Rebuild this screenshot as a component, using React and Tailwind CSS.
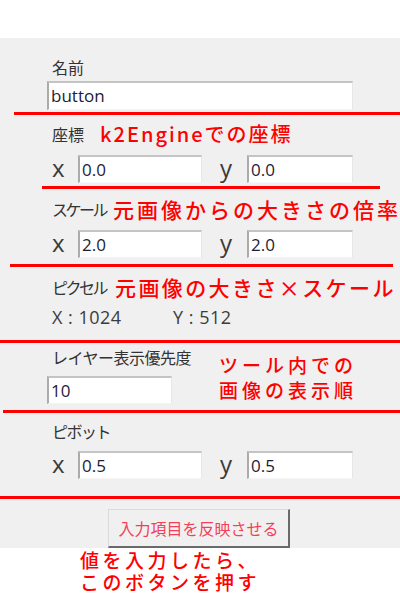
import React from "react";

const JP = { fontFamily: '"Noto Sans CJK JP", "Noto Sans", sans-serif' };
const UI = { fontFamily: '"Open Sans", "Noto Sans CJK JP", sans-serif' };

const RedLine = ({ className }) => (
  <div className={`h-[3px] bg-[#ff0000] ${className}`} />
);

const Field = ({ value, className }) => (
  <div
    className={`h-[28px] bg-white border-t-2 border-l-2 border-t-[#c4c4c4] border-l-[#ababab] border-r border-b border-r-[#e6e6e6] border-b-[#f4f4f4] pl-[2px] flex items-center text-[17px] text-[#1c1c34] ${className}`}
    style={UI}
  >
    {value}
  </div>
);

const Label = ({ children, className = "" }) => (
  <div
    className={`shrink-0 whitespace-nowrap text-[16px] leading-[20px] text-[#333] ${className}`}
    style={JP}
  >
    {children}
  </div>
);

const Note = ({ children, className = "" }) => (
  <div className={`text-[#ff0000] font-medium ${className}`} style={JP}>
    {children}
  </div>
);

const XYRow = ({ x, y, className = "" }) => (
  <div className={`flex items-center pl-[52px] ${className}`}>
    <span className="w-[26px] text-[24px] leading-[28px] text-[#3a3a3a] pb-[2px]" style={UI}>
      x
    </span>
    <Field value={x} className="w-[124px]" />
    <span className="ml-[18px] w-[27px] text-[24px] leading-[28px] text-[#3a3a3a] pb-[2px]" style={UI}>
      y
    </span>
    <Field value={y} className="w-[106px]" />
  </div>
);

export default function App() {
  return (
    <div className="w-[400px] h-[600px] bg-white overflow-hidden">
      <div className="h-[38px]" />

      {/* property panel */}
      <div className="h-[510px] bg-[#f0f0f0] flex flex-col">
        <Label className="mt-[19px] ml-[52px]">名前</Label>
        <Field value="button" className="mt-[4px] ml-[47px] w-[306px] h-[29px]" />
        <RedLine className="mt-[2px] ml-[14px]" />

        <div className="mt-[7px] h-[24px] flex items-center pl-[52px]">
          <Label>座標</Label>
          <Note className="ml-[16px] text-[20px] leading-[24px] tracking-[2px] whitespace-nowrap">
            k2Engineでの座標
          </Note>
        </div>
        <XYRow x="0.0" y="0.0" className="mt-[8px]" />
        <RedLine className="mt-[2px] ml-[42px] w-[338px]" />

        <div className="mt-[8px] h-[24px] flex items-center pl-[52px]">
          <Label className="tracking-[-2.5px]">スケール</Label>
          <Note className="ml-[7px] text-[21px] leading-[24px] tracking-[3px] whitespace-nowrap">
            元画像からの大きさの倍率
          </Note>
        </div>
        <XYRow x="2.0" y="2.0" className="mt-[8px]" />
        <RedLine className="mt-[5px] ml-[10px] w-[383px]" />

        <div className="mt-[8px] h-[24px] flex items-center pl-[52px]">
          <Label className="tracking-[-2.5px]">ピクセル</Label>
          <Note className="ml-[9px] text-[21px] leading-[24px] tracking-[2.4px] whitespace-nowrap">
            元画像の大きさ×スケール
          </Note>
        </div>
        <div
          className="mt-[8px] h-[20px] flex items-center pl-[52px] text-[18px] tracking-[0.5px] text-[#3c3c3c]"
          style={UI}
        >
          <span className="w-[121px]">X : 1024</span>
          <span>Y : 512</span>
        </div>
        <RedLine className="mt-[13px]" />

        <div className="flex">
          <div className="flex flex-col">
            <Label className="mt-[4px] ml-[52px] tracking-[-0.5px]">レイヤー表示優先度</Label>
            <Field value="10" className="mt-[9px] ml-[47px] w-[125px]" />
          </div>
          <Note className="mt-[9px] ml-[28px] text-[19px] leading-[25px] tracking-[4px]">
            <div>ツール内での</div>
            <div>画像の表示順</div>
          </Note>
        </div>
        <RedLine className="mt-[6px] ml-[3px]" />

        <Label className="mt-[8px] ml-[52px] tracking-[-1.5px]">ピボット</Label>
        <XYRow x="0.5" y="0.5" className="mt-[9px]" />
        <RedLine className="mt-[16px]" />

        <button
          className="mt-[10px] ml-[108px] w-[182px] h-[39px] bg-[#f0f0f0] border-t border-l border-t-[#dadada] border-l-[#dadada] border-r-2 border-b-2 border-r-[#6a6a6a] border-b-[#6a6a6a] text-[16px] text-[#f43f5a]"
          style={JP}
        >
          入力項目を反映させる
        </button>
      </div>

      <Note className="mt-[1px] ml-[80px] text-[19px] leading-[22px] tracking-[3.5px]">
        <div>値を入力したら、</div>
        <div>このボタンを押す</div>
      </Note>
    </div>
  );
}
